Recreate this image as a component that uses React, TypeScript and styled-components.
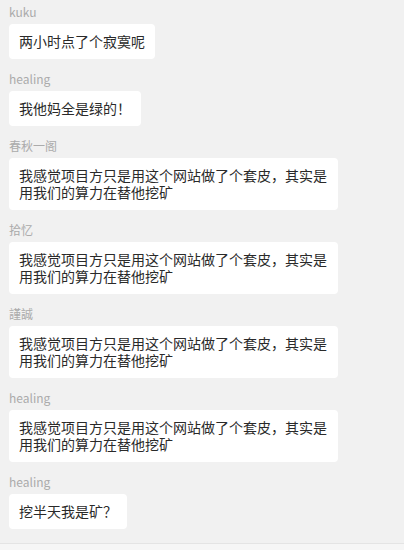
import React from 'react'
import styled, { createGlobalStyle } from 'styled-components'

const GlobalStyle = createGlobalStyle`
  html, body {
    margin: 0;
    padding: 0;
    background: #f1f1f1;
  }
  body {
    font-family: "Noto Sans CJK SC", "Noto Sans", "Liberation Sans", sans-serif;
  }
`

const Page = styled.div`
  width: 404px;
  height: 550px;
  display: flex;
  flex-direction: column;
  background: #f1f1f1;
  overflow: hidden;
`

const MessageList = styled.div`
  flex: 1;
  display: flex;
  flex-direction: column;
  gap: 12px;
  padding: 4px 9px 0;
`

const Message = styled.div`
  display: flex;
  flex-direction: column;
  align-items: flex-start;
  gap: 4px;
`

const Sender = styled.div`
  font-size: 12px;
  line-height: 16px;
  color: #ababab;
`

const Bubble = styled.div`
  box-sizing: border-box;
  max-width: 329px;
  padding: 9px 10px;
  background: #ffffff;
  border-radius: 4px;
  font-size: 14px;
  line-height: 17px;
  color: #2a2a2a;
  word-break: break-all;
`

const Footer = styled.div`
  height: 6px;
  border-top: 1px solid #e4e4e4;
  background: #f6f6f6;
`

const longText = '我感觉项目方只是用这个网站做了个套皮，其实是用我们的算力在替他挖矿'

const messages = [
  { name: 'kuku', text: '两小时点了个寂寞呢' },
  { name: 'healing', text: '我他妈全是绿的！' },
  { name: '春秋一阁', text: longText },
  { name: '拾忆', text: longText },
  { name: '謹誠', text: longText },
  { name: 'healing', text: longText },
  { name: 'healing', text: '挖半天我是矿？' },
]

export default function App() {
  return (
    <>
      <GlobalStyle />
      <Page>
        <MessageList>
          {messages.map((m, i) => (
            <Message key={i}>
              <Sender>{m.name}</Sender>
              <Bubble>{m.text}</Bubble>
            </Message>
          ))}
        </MessageList>
        <Footer />
      </Page>
    </>
  )
}
